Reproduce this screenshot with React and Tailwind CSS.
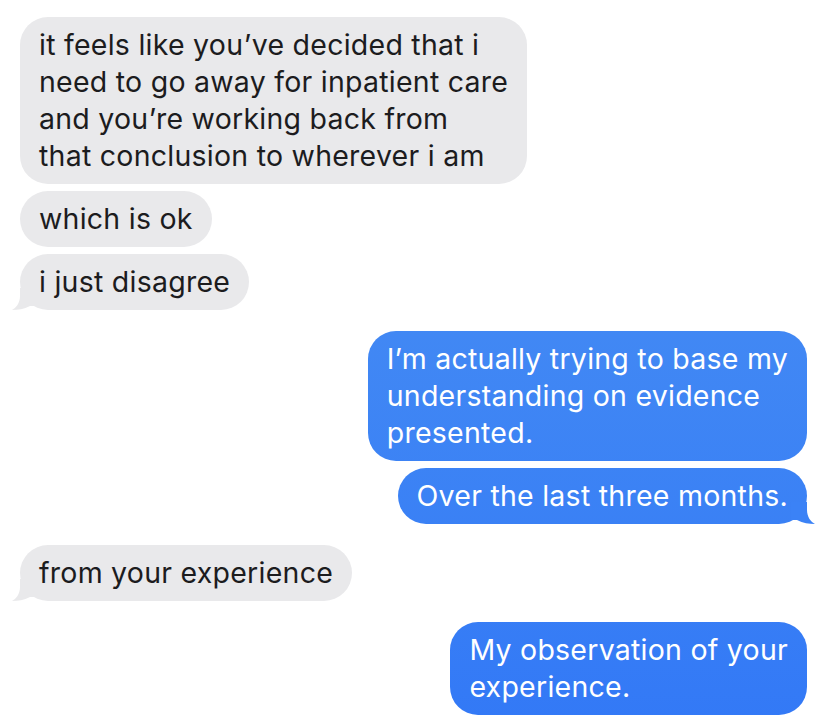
import React from 'react';

const messages = [
    { from: 'them', lines: ['it feels like you’ve decided that i', 'need to go away for inpatient care', 'and you’re working back from', 'that conclusion to wherever i am'] },
    { from: 'them', lines: ['which is ok'] },
    { from: 'them', lines: ['i just disagree'], tail: true },
    { from: 'me', lines: ['I’m actually trying to base my', 'understanding on evidence', 'presented.'], gap: true },
    { from: 'me', lines: ['Over the last three months.'], tail: true },
    { from: 'them', lines: ['from your experience'], tail: true, gap: true },
    { from: 'me', lines: ['My observation of your', 'experience.'], gap: true },
];

function Tail({ mine }) {
    if (mine) {
        return (
            <svg className="absolute bottom-0 -right-[8px]" width="24" height="22" viewBox="0 0 24 22">
                <path d="M16 0 L16 8 C16 15 20 20 24 22 C18 22 12 21 6 18 L0 18 L0 0 Z" fill="#3b82f6" />
            </svg>
        );
    }
    return (
        <svg className="absolute bottom-0 -left-[8px]" width="24" height="22" viewBox="0 0 24 22">
            <path d="M8 0 L8 8 C8 15 4 20 0 22 C6 22 12 21 18 18 L24 18 L24 0 Z" fill="#e9e9eb" />
        </svg>
    );
}

function Bubble({ msg }) {
    const mine = msg.from === 'me';
    return (
        <div className={`flex ${mine ? 'justify-end' : 'justify-start'} ${msg.gap ? 'mt-[21px]' : 'mt-[7px]'} first:mt-0`}>
            <div
                className={`relative rounded-[28px] px-[19px] pt-[9px] pb-[10px] text-[28.5px] leading-[37px] tracking-[0.25px] whitespace-nowrap ${mine
                    ? 'bg-linear-to-b from-[#4e94f2] to-[#3379f6] bg-fixed text-white'
                    : 'bg-[#e9e9eb] text-[#1c1c1e]'
                    }`}
            >
                {msg.tail && <Tail mine={mine} />}
                <div className="relative">
                    {msg.lines.map((line, i) => (
                        <div key={i}>{line}</div>
                    ))}
                </div>
            </div>
        </div>
    );
}

export default function App() {
    return (
        <div className="w-[816px] h-[718px] overflow-hidden bg-white pt-[17px] pl-[20px] pr-[9px] font-['Inter','Noto_Sans',sans-serif] antialiased">
            {messages.map((msg, i) => (
                <Bubble key={i} msg={msg} />
            ))}
        </div>
    );
}
